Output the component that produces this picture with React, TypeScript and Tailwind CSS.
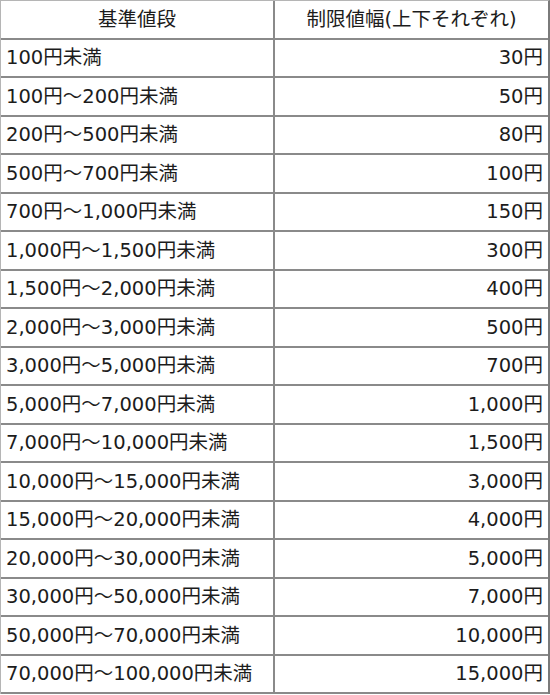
const rows: [string, string][] = [
  ['100円未満', '30円'],
  ['100円～200円未満', '50円'],
  ['200円～500円未満', '80円'],
  ['500円～700円未満', '100円'],
  ['700円～1,000円未満', '150円'],
  ['1,000円～1,500円未満', '300円'],
  ['1,500円～2,000円未満', '400円'],
  ['2,000円～3,000円未満', '500円'],
  ['3,000円～5,000円未満', '700円'],
  ['5,000円～7,000円未満', '1,000円'],
  ['7,000円～10,000円未満', '1,500円'],
  ['10,000円～15,000円未満', '3,000円'],
  ['15,000円～20,000円未満', '4,000円'],
  ['20,000円～30,000円未満', '5,000円'],
  ['30,000円～50,000円未満', '7,000円'],
  ['50,000円～70,000円未満', '10,000円'],
  ['70,000円～100,000円未満', '15,000円'],
];

export default function App() {
  return (
    <div
      className="w-[550px] h-[695px] bg-white text-[19.5px] text-[#1c1c1c]"
      style={{ fontFamily: '"DejaVu Sans", "Noto Sans CJK JP", sans-serif' }}
    >
      <div className="grid grid-cols-[274px_1fr] auto-rows-[38.5px] border-l border-t border-[#b5b5b5] border-r-2 border-r-[#7a7a7a] w-[550px]">
        <div className="flex items-center justify-center border-r-2 border-b-2 border-[#8a8a8a]">基準値段</div>
        <div className="flex items-center justify-center border-b-2 border-[#8a8a8a]">制限値幅(上下それぞれ)</div>
        {rows.map(([range, limit]) => (
          <div key={range} className="contents">
            <div className="flex items-center pl-[5px] border-r-2 border-b-2 border-[#8a8a8a]">{range}</div>
            <div className="flex items-center justify-end pr-[5px] border-b-2 border-[#8a8a8a]">{limit}</div>
          </div>
        ))}
      </div>
    </div>
  );
}
